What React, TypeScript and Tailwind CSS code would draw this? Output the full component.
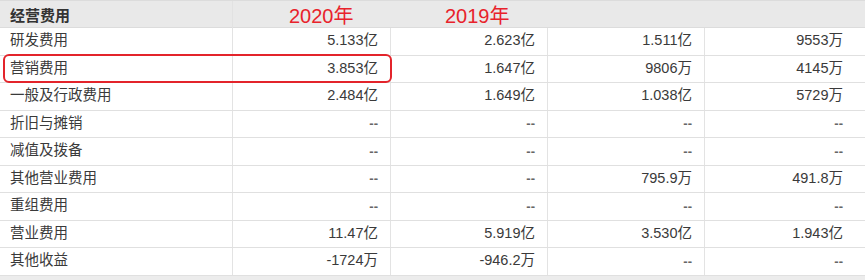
const font = { fontFamily: '"Liberation Sans", "Noto Sans CJK SC", sans-serif' };

type Row = { name: string; values: string[]; highlight?: boolean };

const rows: Row[] = [
  { name: '研发费用', values: ['5.133亿', '2.623亿', '1.511亿', '9553万'] },
  { name: '营销费用', values: ['3.853亿', '1.647亿', '9806万', '4145万'], highlight: true },
  { name: '一般及行政费用', values: ['2.484亿', '1.649亿', '1.038亿', '5729万'] },
  { name: '折旧与摊销', values: ['--', '--', '--', '--'] },
  { name: '减值及拨备', values: ['--', '--', '--', '--'] },
  { name: '其他营业费用', values: ['--', '--', '795.9万', '491.8万'] },
  { name: '重组费用', values: ['--', '--', '--', '--'] },
  { name: '营业费用', values: ['11.47亿', '5.919亿', '3.530亿', '1.943亿'] },
  { name: '其他收益', values: ['-1724万', '-946.2万', '--', '--'] },
];

const cols = 'grid grid-cols-[232px_158px_157px_157px_1fr]';

function Cell({ value, last }: { value: string; last?: boolean }) {
  const dash = value === '--';
  return (
    <div
      className={`flex items-center justify-end border-l border-[#e3e3e3] ${last ? 'pr-[22px]' : 'pr-3'} ${
        dash ? 'text-[#666] text-[13px] font-bold' : 'text-[#3a3a3a] text-[14.5px]'
      }`}
    >
      {value}
    </div>
  );
}

export default function App() {
  return (
    <div className="w-[865px] h-[280px] bg-white overflow-hidden" style={font}>
      {/* Header */}
      <div className={`${cols} h-[28px] bg-[#e9e9e9] border-t border-[#dadada] border-b border-[#dcdcdc]`}>
        <div className="flex items-center pl-[10px] text-[15px] font-bold text-[#333]">经营费用</div>
        <div className="flex items-center pl-[56px] text-[20px] text-[#e8222b] border-l border-[#e2e2e2]">2020年</div>
        <div className="flex items-center pl-[55px] text-[20px] text-[#e8222b]">2019年</div>
        <div />
        <div />
      </div>

      {/* Body */}
      {rows.map((r) => (
        <div key={r.name} className={`${cols} relative h-[27.5px] border-b border-[#e0e0e0]`}>
          <div className="flex items-center pl-[10px] text-[14.5px] text-[#3a3a3a]">{r.name}</div>
          {r.values.map((v, i) => (
            <Cell key={i} value={v} last={i === 3} />
          ))}
          {r.highlight && (
            <div className="absolute left-[3px] top-[-2px] w-[389px] h-[29px] border-2 border-[#e3242b] rounded-[6px]" />
          )}
        </div>
      ))}
      <div className="h-[6px] bg-[#ececec]" />
    </div>
  );
}
